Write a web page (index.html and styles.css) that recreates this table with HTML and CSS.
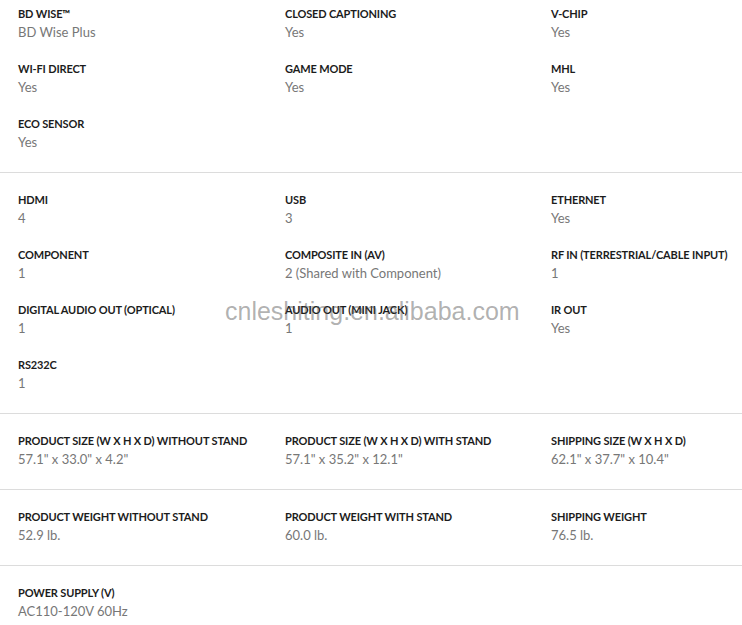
FILE: index.html
```html
<!DOCTYPE html>
<html>
<head>
<meta charset="utf-8"/>
    <title>Specifications</title>
    <link rel="stylesheet" href="styles.css">
</head>
<body>
    <div class="specs">
        <div class="group first">
            <div class="item"><div class="name">BD WISE™</div><div class="value">BD Wise Plus</div></div>
            <div class="item"><div class="name">CLOSED CAPTIONING</div><div class="value">Yes</div></div>
            <div class="item"><div class="name">V-CHIP</div><div class="value">Yes</div></div>
            <div class="item"><div class="name">WI-FI DIRECT</div><div class="value">Yes</div></div>
            <div class="item"><div class="name">GAME MODE</div><div class="value">Yes</div></div>
            <div class="item"><div class="name">MHL</div><div class="value">Yes</div></div>
            <div class="item"><div class="name">ECO SENSOR</div><div class="value">Yes</div></div>
        </div>
        <div class="group">
            <div class="item"><div class="name">HDMI</div><div class="value">4</div></div>
            <div class="item"><div class="name">USB</div><div class="value">3</div></div>
            <div class="item"><div class="name">ETHERNET</div><div class="value">Yes</div></div>
            <div class="item"><div class="name">COMPONENT</div><div class="value">1</div></div>
            <div class="item"><div class="name">COMPOSITE IN (AV)</div><div class="value">2 (Shared with Component)</div></div>
            <div class="item"><div class="name">RF IN (TERRESTRIAL/CABLE INPUT)</div><div class="value">1</div></div>
            <div class="item"><div class="name">DIGITAL AUDIO OUT (OPTICAL)</div><div class="value">1</div></div>
            <div class="item"><div class="name">AUDIO OUT (MINI JACK)</div><div class="value">1</div></div>
            <div class="item"><div class="name">IR OUT</div><div class="value">Yes</div></div>
            <div class="item"><div class="name">RS232C</div><div class="value">1</div></div>
        </div>
        <div class="group">
            <div class="item"><div class="name">PRODUCT SIZE (W X H X D) WITHOUT STAND</div><div class="value">57.1" x 33.0" x 4.2"</div></div>
            <div class="item"><div class="name">PRODUCT SIZE (W X H X D) WITH STAND</div><div class="value">57.1" x 35.2" x 12.1"</div></div>
            <div class="item"><div class="name">SHIPPING SIZE (W X H X D)</div><div class="value">62.1" x 37.7" x 10.4"</div></div>
        </div>
        <div class="group">
            <div class="item"><div class="name">PRODUCT WEIGHT WITHOUT STAND</div><div class="value">52.9 lb.</div></div>
            <div class="item"><div class="name">PRODUCT WEIGHT WITH STAND</div><div class="value">60.0 lb.</div></div>
            <div class="item"><div class="name">SHIPPING WEIGHT</div><div class="value">76.5 lb.</div></div>
        </div>
        <div class="group last">
            <div class="item"><div class="name">POWER SUPPLY (V)</div><div class="value">AC110-120V 60Hz</div></div>
        </div>
    </div>
    <div class="watermark">cnleshiting.en.alibaba.com</div>
</body>
</html>
```

FILE: styles.css
```css
body {
    margin: 0;
    background: #fff;
    font-family: Lato, "Liberation Sans", sans-serif;
    overflow: hidden;
}

.specs {
    width: 742px;
}

.group {
    display: grid;
    grid-template-columns: 267px 266px 1fr;
    row-gap: 19px;
    padding: 18px 0 21px 18px;
    border-bottom: 1px solid #dcdcdc;
}
.group.first {
    padding-top: 5px;
}
.group.last {
    border-bottom: none;
}

.item {
    white-space: nowrap;
}

.name {
    font-size: 11px;
    line-height: 18px;
    font-weight: bold;
    color: #1c1c1c;
    letter-spacing: -0.15px;
}

.value {
    font-size: 13px;
    line-height: 18px;
    color: #777;
}

.watermark {
    position: absolute;
    left: 225px;
    top: 296px;
    font-family: "Liberation Sans", Arial, sans-serif;
    font-size: 25px;
    line-height: 30px;
    color: rgba(80, 80, 80, 0.45);
    pointer-events: none;
}
```
